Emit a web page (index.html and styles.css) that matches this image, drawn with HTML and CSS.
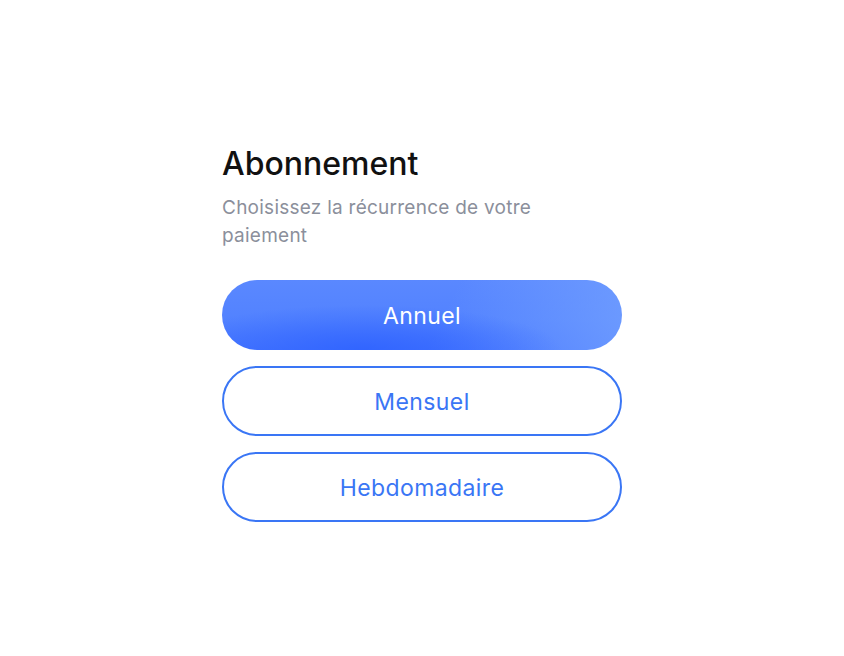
FILE: index.html
```html
<!DOCTYPE html>
<html lang="fr">
<head>
<meta charset="utf-8">
<title>Abonnement</title>
<link rel="stylesheet" href="styles.css">
</head>
<body>
<main class="page">
  <section class="card">
    <h1 class="title">Abonnement</h1>
    <p class="subtitle">Choisissez la récurrence de votre paiement</p>
    <div class="options">
      <button class="option option-active">Annuel</button>
      <button class="option">Mensuel</button>
      <button class="option">Hebdomadaire</button>
    </div>
  </section>
</main>
</body>
</html>
```
FILE: styles.css
```css
* { box-sizing: border-box; }
html, body { margin: 0; padding: 0; background: #ffffff; }
body { font-family: Inter, "Noto Sans", sans-serif; }
.page {
  width: 844px;
  height: 656px;
  display: flex;
  justify-content: center;
  padding-top: 145px;
}
.card { width: 400px; }
.title {
  margin: 0;
  font-size: 32px;
  line-height: 38px;
  font-weight: 500;
  color: #111111;
  letter-spacing: 0;
}
.subtitle {
  margin: 11px 0 0 0;
  width: 340px;
  font-size: 19px;
  line-height: 28px;
  letter-spacing: 0.25px;
  color: #8b8f9b;
}
.options {
  margin-top: 30px;
  display: flex;
  flex-direction: column;
  gap: 16px;
}
.option {
  height: 70px;
  width: 400px;
  border-radius: 35px;
  border: 2px solid #3a76f5;
  background: #ffffff;
  color: #3a76f5;
  font-family: inherit;
  font-size: 23px;
  letter-spacing: 0.4px;
  font-weight: 400;
  padding: 2px 0 0 0;
}
.option-active {
  border: none;
  color: #ffffff;
  background:
    radial-gradient(ellipse 200px 45px at 35% 100%, rgba(46,98,255,0.85), rgba(46,98,255,0) 100%),
    linear-gradient(115deg, rgba(255,255,255,0) 55%, rgba(120,165,255,0.7) 100%),
    linear-gradient(to bottom, #5a88ff 0%, #5282ff 60%, #4676ff 100%);
}
```
